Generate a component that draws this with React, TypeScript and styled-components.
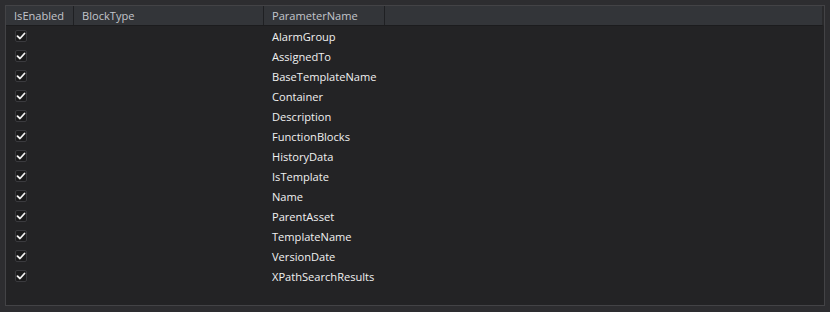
import React from 'react';
import styled, { createGlobalStyle } from 'styled-components';

const GlobalStyle = createGlobalStyle`
  html, body {
    margin: 0;
    padding: 0;
    background: #2d2d30;
  }
`;

const Page = styled.div`
  width: 830px;
  height: 312px;
  box-sizing: border-box;
  padding: 5px;
  background: #2d2d30;
  font-family: 'Open Sans', 'Noto Sans', sans-serif;
  font-size: 11.1px;
`;

const Grid = styled.div`
  height: 301px;
  box-sizing: border-box;
  border: 1px solid #434346;
  background: #232325;
  display: flex;
  flex-direction: column;
  overflow: hidden;
`;

const HeaderRow = styled.div`
  display: flex;
  height: 19px;
  background: #333539;
  border-bottom: 1px solid #1c1c1e;
  border-right: 2px solid #29292b;
`;

const HeaderCell = styled.div<{ width?: number }>`
  ${(p) => (p.width ? `width: ${p.width}px;` : 'flex: 1;')}
  box-sizing: border-box;
  padding-left: 8px;
  line-height: 19px;
  color: #c3c6cc;
  border-right: ${(p) => (p.width ? '1px solid #1f2023' : 'none')};
  white-space: nowrap;
`;

const Row = styled.div`
  display: flex;
  height: 20px;
  align-items: center;
`;

const Cell = styled.div<{ width: number }>`
  width: ${(p) => p.width}px;
  box-sizing: border-box;
  padding-left: 8px;
  color: #f1f1f1;
  white-space: nowrap;
`;

const CheckCell = styled.div<{ width: number }>`
  width: ${(p) => p.width}px;
  box-sizing: border-box;
  padding-left: 9px;
  display: flex;
  align-items: center;
`;

const Box = styled.span`
  width: 12px;
  height: 12px;
  box-sizing: border-box;
  border: 1px solid #3a3a3e;
  border-radius: 2px;
  background: #1b1b1c;
  display: flex;
  align-items: center;
  justify-content: center;
`;

const columns = { enabled: 68, block: 190, param: 121 };

const params = [
  'AlarmGroup',
  'AssignedTo',
  'BaseTemplateName',
  'Container',
  'Description',
  'FunctionBlocks',
  'HistoryData',
  'IsTemplate',
  'Name',
  'ParentAsset',
  'TemplateName',
  'VersionDate',
  'XPathSearchResults',
];

const Check = () => (
  <Box>
    <svg width="10" height="10" viewBox="0 0 10 10">
      <path d="M1.5 5.2 L4 7.5 L8.5 2.5" fill="none" stroke="#f2f2f2" strokeWidth="1.8" strokeLinecap="round" strokeLinejoin="round" />
    </svg>
  </Box>
);

export default function App() {
  return (
    <Page>
      <GlobalStyle />
      <Grid>
        <HeaderRow>
          <HeaderCell width={columns.enabled}>IsEnabled</HeaderCell>
          <HeaderCell width={columns.block}>BlockType</HeaderCell>
          <HeaderCell width={columns.param}>ParameterName</HeaderCell>
          <HeaderCell />
        </HeaderRow>
        <div>
          {params.map((name) => (
            <Row key={name}>
              <CheckCell width={columns.enabled}>
                <Check />
              </CheckCell>
              <Cell width={columns.block} />
              <Cell width={columns.param}>{name}</Cell>
            </Row>
          ))}
        </div>
      </Grid>
    </Page>
  );
}
